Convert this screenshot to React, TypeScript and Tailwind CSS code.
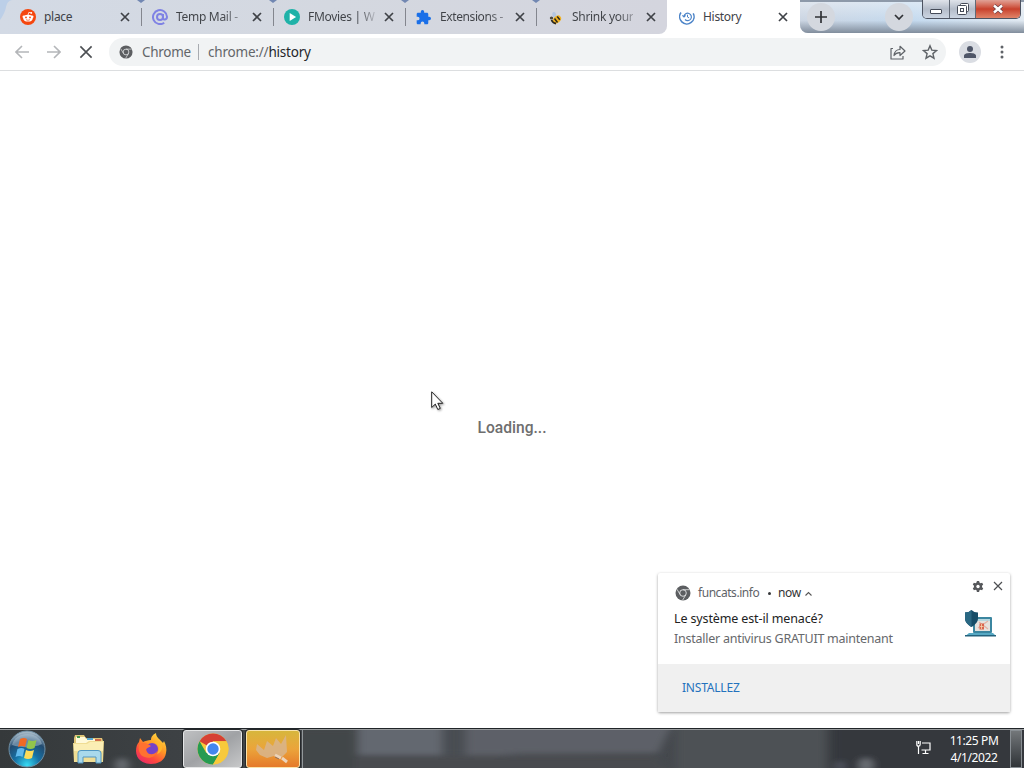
import React from 'react';
import clsx from 'clsx';

const CloseIcon: React.FC<{ className?: string }> = ({ className }) => (
  <svg className={className} viewBox="0 0 10 10" fill="none" stroke="currentColor">
    <path d="M1 1l8 8M9 1L1 9" />
  </svg>
);

const RedditIcon = () => (
  <svg className="w-4 h-4" viewBox="0 0 16 16">
    <circle cx="8" cy="8" r="8" fill="#f5470f" />
    <path d="M8 6l.8-2.600 2.200.4" stroke="#fff" strokeWidth=".8" fill="none" />
    <circle cx="11.300" cy="3.900" r=".9" fill="#fff" />
    <circle cx="3.800" cy="7.800" r="1.300" fill="#fff" />
    <circle cx="12.200" cy="7.800" r="1.300" fill="#fff" />
    <ellipse cx="8" cy="9.200" rx="4.700" ry="3.400" fill="#fff" />
    <circle cx="6" cy="8.400" r=".9" fill="#f5470f" />
    <circle cx="10" cy="8.400" r=".9" fill="#f5470f" />
    <path d="M6 10.700q2 1.200 4 0" stroke="#f5470f" strokeWidth=".7" fill="none" />
  </svg>
);

const MailIcon = () => (
  <svg className="w-4 h-4" viewBox="0 0 16 16" fill="none" stroke="#7f82e4" strokeWidth="2">
    <circle cx="8" cy="8" r="3" />
    <path d="M11 5v3.800c0 2.600 4 2.200 4-1A7 7 0 1 0 12.200 13.700" />
  </svg>
);

const PlayIcon = () => (
  <svg className="w-4 h-4" viewBox="0 0 16 16">
    <circle cx="8" cy="8" r="8" fill="#1fb2a8" />
    <path d="M5.700 4v8l6.400-4z" fill="#fff" />
  </svg>
);

const PuzzleIcon = () => (
  <svg className="w-[15px] h-[15px] mr-px" viewBox="1 1 22 22" fill="#1a6fe8">
    <path d="M20.500 11H19V7c0-1.100-.9-2-2-2h-4V3.500a2.500 2.500 0 0 0-5 0V5H4c-1.100 0-2 .9-2 2v3.800h1.500a2.700 2.700 0 0 1 0 5.400H2V20c0 1.100.9 2 2 2h3.800v-1.500a2.700 2.700 0 0 1 5.400 0V22H17c1.100 0 2-.9 2-2v-4h1.500a2.500 2.500 0 0 0 0-5z" />
  </svg>
);

const BeeIcon = () => (
  <svg className="w-4 h-4" viewBox="0 0 16 16">
    <ellipse cx="6.300" cy="6" rx="1.900" ry="3" fill="#b4c6e2" transform="rotate(-15 6.300 6)" />
    <ellipse cx="3.500" cy="9" rx="1.700" ry="1.500" fill="#4a4740" />
    <ellipse cx="9" cy="10.500" rx="4.600" ry="3.300" fill="#f2b322" transform="rotate(-42 9 10.500)" />
    <path d="M6.500 9.500l3 4M9.200 7.500l2.600 3.200" stroke="#2d281d" strokeWidth="1.500" />
    <path d="M3.500 11q1.500 3.500 4.500 3.500" stroke="#2d281d" strokeWidth="1.800" fill="none" />
  </svg>
);

const HistoryIcon = () => (
  <svg className="w-4 h-4" viewBox="0 0 16 16" fill="none" stroke="#4c84c8">
    <path d="M2 3.500A7.200 7.200 0 1 0 14.200 4.300" strokeWidth="1.500" />
    <path d="M5 7.500A3.700 3.700 0 1 1 6 10.500M3.400 6.300L5 7.900l1.600-1.600" strokeWidth="1.200" />
    <path d="M8.500 5.700v2.300l1.600.9" strokeWidth="1" />
  </svg>
);

const ChromeGrayIcon: React.FC<{ className?: string }> = ({ className }) => (
  <svg className={className} viewBox="0 0 16 16">
    <circle cx="8" cy="8" r="7.500" fill="#5c5e61" />
    <circle cx="8" cy="8" r="3.300" fill="none" stroke="#e6e8e9" strokeWidth=".9" />
    <path d="M8 4.700h6.500M5.100 9.600L2 4.300M10.800 9.800L7.600 15.200" stroke="#e6e8e9" strokeWidth=".8" />
  </svg>
);

type TabItem = {
  title: string;
  icon: React.ReactNode;
  className: string;
  titleClass?: string;
};

const tabs: TabItem[] = [
  { title: 'place', icon: <RedditIcon />, className: 'w-[141px] pl-5', titleClass: 'text-[#3f4247]' },
  {
    title: 'Temp Mail -',
    icon: <MailIcon />,
    className: 'w-[132px] pl-[11px]',
    titleClass: 'bg-linear-to-r from-[#3f4247] from-75% to-[#3f4247]/50 bg-clip-text text-transparent',
  },
  {
    title: 'FMovies | W',
    icon: <PlayIcon />,
    className: 'w-[132px] pl-[11px]',
    titleClass: 'bg-linear-to-r from-[#3f4247] from-75% to-[#3f4247]/20 bg-clip-text text-transparent',
  },
  {
    title: 'Extensions -',
    icon: <PuzzleIcon />,
    className: 'w-[131px] pl-[11px]',
    titleClass: 'tracking-[-0.4px] bg-linear-to-r from-[#3f4247] from-75% to-[#3f4247]/50 bg-clip-text text-transparent',
  },
  {
    title: 'Shrink your',
    icon: <BeeIcon />,
    className: 'w-[131px] pl-3',
    titleClass: 'bg-linear-to-r from-[#3f4247] from-75% to-[#3f4247]/40 bg-clip-text text-transparent',
  },
];

const TabStrip = () => (
  <div className="flex h-[34px] bg-white shrink-0 text-[12px] tracking-[-0.3px] text-[#3f4247]">
    <div className="flex w-[667px] rounded-br-lg bg-linear-to-r from-[#d3dae5] via-[#d4d8e0] to-[#d4d5de]">
      {tabs.map((tab, i) => (
        <div key={tab.title} className={clsx('flex items-center relative shrink-0', tab.className)}>
          {i === 0 && (
            <svg className="absolute left-0 top-0 w-3 h-5" viewBox="0 0 12 20">
              <path d="M0 0h12Q7 1 6 7T0 20z" fill="#bccfe8" />
            </svg>
          )}
          {i > 0 && <span className="absolute left-0 top-2 w-px h-[18px] bg-[#83868e]" />}
          {i > 0 && (
            <svg className="absolute -left-[4px] top-0 w-2 h-[3px]" viewBox="0 0 8 3">
              <path d="M0 0h8L4 3z" fill="#7187b2" />
            </svg>
          )}
          {tab.icon}
          <span className={clsx('ml-2 whitespace-nowrap', tab.titleClass)}>{tab.title}</span>
          <CloseIcon className="ml-auto mr-[11px] w-[10px] h-[10px] stroke-[1.7]" />
        </div>
      ))}
    </div>

    <div className="flex items-center w-[133px] pl-3 rounded-t-lg bg-white">
      <HistoryIcon />
      <span className="ml-2">History</span>
      <CloseIcon className="ml-auto mr-3 w-[10px] h-[10px] stroke-[1.7]" />
    </div>

    {/* Aero window frame */}
    <div className="flex flex-1 h-[33px] rounded-bl-lg border-t-2 border-[#8d99a9] bg-linear-to-r from-[#c4cddb] via-[#b9d3ec] to-[#e2e9f0]">
      <div className="flex flex-1 rounded-bl-lg bg-linear-to-b from-[#f2f6fa]/60 via-[#dce8f3]/30 via-60% to-[#818d9c]">
        <div className="ml-[7px] mt-px w-7 h-7 rounded-full bg-[#d4d8df] flex items-center justify-center">
          <svg className="w-3 h-3" viewBox="0 0 12 12" stroke="#303236" strokeWidth="1.700">
            <path d="M6 0v12M0 6h12" />
          </svg>
        </div>
        <div className="ml-[50px] mt-px w-7 h-7 rounded-full bg-[#d4d8df] flex items-center justify-center">
          <svg className="w-[10px] h-[7px]" viewBox="0 0 10 7" fill="none" stroke="#303236" strokeWidth="1.700">
            <path d="M1 1l4 4 4-4" />
          </svg>
        </div>
        <div className="flex ml-auto mr-[3px] -mt-0.5 w-[99px] h-[19px] rounded-b-[5px] border border-t-0 border-[#4d5361] overflow-hidden">
          <div className="w-[27px] bg-linear-to-b from-[#dfe3ea] via-[#b4bcc9] to-[#ccd5e2] border-r border-[#626a77] flex items-center justify-center">
            <svg className="w-3 h-[5px] mt-[5px]" viewBox="0 0 12 5">
              <rect x=".5" y=".5" width="11" height="4" rx=".5" fill="#fff" stroke="#454b58" />
            </svg>
          </div>
          <div className="w-[26px] bg-linear-to-b from-[#dfe3ea] via-[#b4bcc9] to-[#ccd5e2] border-r border-[#626a77] flex items-center justify-center">
            <svg className="w-3 h-3" viewBox="0 0 12 12" fill="#fff" stroke="#454b58">
              <rect x="3.500" y=".5" width="8" height="8" rx="1" />
              <rect x=".5" y="2.500" width="9" height="9" rx="1" />
              <rect x="3.500" y="5.500" width="3" height="3" />
            </svg>
          </div>
          <div className="flex-1 bg-linear-to-b from-[#e0a196] via-[#c8402c] to-[#e08368] flex items-center justify-center">
            <svg className="w-3 h-[10px]" viewBox="0 0 12 10">
              <path d="M2 1.500l8 7M10 1.500l-8 7" stroke="#683e47" strokeWidth="3.800" />
              <path d="M2 1.500l8 7M10 1.500l-8 7" stroke="#fff" strokeWidth="2.400" />
            </svg>
          </div>
        </div>
      </div>
    </div>
  </div>
);

const Toolbar = () => (
  <div className="flex items-center h-[37px] shrink-0 bg-white border-b border-[#dcdee0] pl-[15px]">
    <svg className="w-[14px] h-[14px]" viewBox="0 0 14 14" fill="none" stroke="#b4b6b9" strokeWidth="1.600">
      <path d="M14 7H1.500M7 1L1 7l6 6" />
    </svg>
    <svg className="ml-[18px] w-[14px] h-[14px]" viewBox="0 0 14 14" fill="none" stroke="#b4b6b9" strokeWidth="1.600">
      <path d="M0 7h12.500M7 1l6 6-6 6" />
    </svg>
    <CloseIcon className="ml-[18px] w-[14px] h-[14px] stroke-[1.15] text-[#4c4f53]" />
    <div className="ml-4 flex items-center w-[837px] h-7 rounded-full bg-[#f1f3f4] pl-[10px] text-[13.5px]">
      <ChromeGrayIcon className="w-[14px] h-[14px]" />
      <span className="ml-[9px] w-[49px] whitespace-nowrap tracking-[-0.3px] text-[#63666a]">Chrome</span>
      <span className="ml-[7px] w-px h-4 bg-[#a8abb0]" />
      <span className="ml-[9px] tracking-[-0.2px] text-[#63666a] whitespace-nowrap">
        chrome://<span className="text-[#24262a]">history</span>
      </span>
      <svg className="ml-auto w-4 h-4" viewBox="0 0 16 16" fill="none" stroke="#5f6368" strokeWidth="1.200">
        <path d="M3 4.500H1V15h12v-3M4 11.500c.5-4 2.500-6 6-6V2.300L15 7l-5 4.500V8.700c-2.500-.1-4.500.8-6 2.800z" strokeLinejoin="round" />
      </svg>
      <svg className="ml-4 mr-2 w-4 h-4" viewBox="0 0 16 16" fill="none" stroke="#5f6368" strokeWidth="1.400">
        <path d="M8 1.800l1.800 4.300 4.700.4-3.600 3.100 1.100 4.600L8 11.800l-4 2.400 1.100-4.600-3.600-3.100 4.700-.4z" />
      </svg>
    </div>
    <div className="ml-[13px] w-[22px] h-[22px] rounded-full bg-[#dadde3] flex items-center justify-center">
      <svg className="w-3 h-3" viewBox="0 0 12 12" fill="#4f5668">
        <circle cx="6" cy="3" r="3" />
        <path d="M0 12V9.500C0 7.800 3.500 7 6 7s6 .8 6 2.500V12z" />
      </svg>
    </div>
    <svg className="ml-[19px] w-1 h-[14px]" viewBox="0 0 4 14" fill="#5f6368">
      <circle cx="2" cy="2" r="1.500" />
      <circle cx="2" cy="7" r="1.500" />
      <circle cx="2" cy="12" r="1.500" />
    </svg>
  </div>
);

const AntivirusIcon = () => (
  <svg className="w-8 h-[30px]" viewBox="0 0 32 30">
    <rect x="9" y="8" width="19" height="16" rx="1" fill="#3b86a0" />
    <rect x="11" y="10" width="15" height="12" fill="#e6e2de" />
    <path d="M11 10h15v2H11z" fill="#b6d7df" />
    <path d="M14 19l10-7M15 13l9 7" stroke="#e3b0a4" strokeWidth="1.200" />
    <rect x="15.500" y="14.500" width="4.500" height="6" fill="#d9644d" />
    <path d="M17.500 15v5M16 17.500h3.500" stroke="#f5d5b0" strokeWidth=".8" />
    <path d="M5 24h24l2.500 2.500H2z" fill="#56a9c4" />
    <path d="M1 26h31v1.500H1z" fill="#23627d" />
    <path d="M1 3.500Q5 3.500 7.500 1 10 3.500 14 3.500v6c0 3.500-3 6.500-6.500 8.500C4 16 1 13 1 9.500z" fill="#164d68" />
    <path d="M7.500 1v17C4 16 1 13 1 9.500v-6Q5 3.500 7.500 1z" fill="#2a6883" />
  </svg>
);

const Notification = () => (
  <div className="absolute left-[658px] top-[573px] w-[352px] h-[139px] rounded-[2px] bg-white shadow-[0_1px_3px_rgba(0,0,0,0.38)] flex flex-col">
    <div className="flex h-[91px]">
      <div className="pl-4 pt-3 flex-1 whitespace-nowrap">
        <div className="flex items-center h-4 text-[12px] text-[#5f6368]">
          <ChromeGrayIcon className="ml-[1px] w-4 h-4" />
          <span className="ml-[7px] w-[70px] tracking-[-0.45px]">funcats.info</span>
          <span className="w-[3px] h-[3px] rounded-full bg-[#35373a]" />
          <span className="ml-[7px] w-[24px] tracking-[-0.4px] text-[#333]">now</span>
          <svg className="ml-[3px] w-[7px] h-[5px]" viewBox="0 0 7 5" fill="none" stroke="#555" strokeWidth="1.100">
            <path d="M.5 4.500l3-3 3 3" />
          </svg>
        </div>
        <div className="mt-[8px] text-[12.5px] leading-5 tracking-[-0.13px] text-[#222]">Le système est-il menacé?</div>
        <div className="text-[12.5px] leading-5 tracking-[-0.25px] text-[#66686b]">Installer antivirus GRATUIT maintenant</div>
      </div>
      <div className="w-[46px] pt-2">
        <div className="flex items-center ml-[8px]">
          <svg className="w-3 h-[11px]" viewBox="0 0 12 12">
            <path d="M4.800 0h2.400l.4 1.700 1.200.7 1.700-.5 1.200 2-1.300 1.300v1.500l1.300 1.300-1.200 2-1.700-.5-1.200.7-.4 1.800H4.800l-.4-1.800-1.200-.7-1.700.5-1.200-2 1.300-1.300V5.200L.3 3.900l1.200-2 1.700.5 1.200-.7z" fill="#56585b" />
            <circle cx="6" cy="6" r="1.800" fill="#fff" />
          </svg>
          <CloseIcon className="ml-[9px] -mt-px w-[10px] h-[10px] text-[#4d4f52] stroke-[1.2]" />
        </div>
        <div className="mt-[17px]">
          <AntivirusIcon />
        </div>
      </div>
    </div>
    <div className="flex-1 flex items-center pl-6 bg-[#f0f0f0] text-[12px] tracking-[-0.2px] text-[#2372bd]">INSTALLEZ</div>
  </div>
);

const StartOrb = () => (
  <svg className="w-[38px] h-[38px]" viewBox="0 0 38 38">
    <defs>
      <radialGradient id="orb" cx=".5" cy=".95" r=".9">
        <stop offset="0" stopColor="#37dcf4" />
        <stop offset=".4" stopColor="#1671a5" />
        <stop offset=".75" stopColor="#234b70" />
        <stop offset="1" stopColor="#a1b5c4" />
      </radialGradient>
    </defs>
    <circle cx="19" cy="19" r="18" fill="url(#orb)" stroke="#6e8fa5" />
    <path d="M4 15C7 1 30 0 34 14c-8 4-21 4-30 1z" fill="#bed2df" opacity=".45" />
    <path d="M12 9q4-2 7 0l-2 8q-3-2-7 0z" fill="#f06a24" />
    <path d="M20.500 10q4 2 8 0l-2 8q-4 2-8 0z" fill="#93c54b" />
    <path d="M9.500 19q4-2 7 0l-2 8q-3-2-7 0z" fill="#60b9ec" />
    <path d="M18 20q4 2 8 0l-2 8q-4 2-8 0z" fill="#fddc59" />
  </svg>
);

const FolderIcon = () => (
  <svg className="w-[34px] h-[32px]" viewBox="0 0 34 32">
    <path d="M2 5l1-3h9l2 3h16l1 3v18H2z" fill="#dfc477" />
    <path d="M4 4h9l1 2h15v5H4z" fill="#fff9d9" />
    <path d="M5 3h3v2H5z" fill="#45964c" />
    <path d="M15 5h6v2h-6z" fill="#59a9d1" />
    <path d="M23 6h6v2h-6z" fill="#d16d4b" />
    <path d="M1 10h13l3-2h15l-1 21H2z" fill="#f0dd94" />
    <path d="M2 11h13l3-2h13v9H2z" fill="#fbeeb4" />
    <path d="M6 30V20q0-2.500 3-2.500h17q3 0 3 2.500v10h-5v-6H11v6z" fill="#a9d9ec" stroke="#5297c2" />
  </svg>
);

const FirefoxIcon = () => (
  <svg className="w-8 h-8" viewBox="0 0 32 32">
    <defs>
      <linearGradient id="fox" x1=".85" y1="0" x2=".2" y2="1">
        <stop offset="0" stopColor="#ffe447" />
        <stop offset=".4" stopColor="#ff9824" />
        <stop offset=".72" stopColor="#ff493d" />
        <stop offset="1" stopColor="#e72869" />
      </linearGradient>
    </defs>
    <path d="M5 5l3 4c2-1 5-2 8-2 0-4 3-6 5-7 0 5 5 7 7 10l1-2c2 4 3 8 2 12-1 7-7 11-15 11S1 26 1 18c0-4 1-7 3-9z" fill="url(#fox)" />
    <circle cx="17" cy="16" r="6" fill="#7542c8" />
    <path d="M4 12c4-4 9-1 12 1-2 2-4 1-5 4 1 5 8 6 11 1-1 7-10 9-16 4-2-3-3-6-2-10z" fill="#ff7130" />
    <path d="M19 9c5 2 6 7 3 12 5-2 6-6 5-10-3-3-5-3-8-2z" fill="#ffb52b" />
  </svg>
);

const ChromeIcon = () => (
  <svg className="w-8 h-8" viewBox="0 0 32 32">
    <circle cx="16" cy="16" r="15.500" fill="#f7c93c" />
    <path d="M16 16L2.600 8.250A15.500 15.500 0 0 1 29.400 8.250H16z" fill="#d64034" />
    <path d="M2.600 8.250A15.500 15.500 0 0 0 16 31.500l6.700-11.600L16 16l-6.700 3.900z" fill="#269b52" />
    <path d="M16 8.300h13.400a15.500 15.500 0 0 1-13.400 23.200l6.700-11.600z" fill="#f7c93c" />
    <circle cx="16" cy="16" r="7.300" fill="#fff" />
    <circle cx="16" cy="16" r="5.700" fill="#4387ee" />
  </svg>
);

const Taskbar = () => (
  <div className="relative flex h-10 shrink-0 border-t border-[#202529] bg-linear-to-r from-[#35393b] via-[#4d5156] to-[#33363b]">
    {/* Aero glass reflections */}
    <svg className="absolute left-0 top-0 w-full h-[39px]" viewBox="0 0 1024 39" preserveAspectRatio="none">
      <defs>
        <filter id="soft" x="-20%" y="-40%" width="140%" height="180%">
          <feGaussianBlur stdDeviation="4 2.500" />
        </filter>
      </defs>
      <g filter="url(#soft)">
        <rect x="296" width="60" height="42" fill="#42474a" />
        <rect x="358" y="-8" width="84" height="34" fill="#646770" />
        <rect x="445" y="-8" width="18" height="34" fill="#4a4d53" />
        <path d="M466-8h208l-16 32H520l-20 2h-34z" fill="#5d6068" />
        <path d="M356 27h300l16 16H356z" fill="#484c50" />
        <rect x="676" y="-8" width="150" height="55" fill="#4d5155" />
        <rect x="832" y="-8" width="200" height="55" fill="#35383d" />
        <circle cx="866" cy="36" r="7" fill="#6b6e75" />
        <circle cx="840" cy="37" r="5" fill="#50535e" />
        <circle cx="122" cy="36" r="7" fill="#666a70" />
      </g>
      <rect width="1024" height="1" fill="#999c9e" />
    </svg>
    <div className="relative flex items-center w-full">
      <div className="ml-2"><StartOrb /></div>
      <div className="ml-[26px]"><FolderIcon /></div>
      <div className="ml-[29px]"><FirefoxIcon /></div>
      <div className="ml-4 w-[59px] h-[38px] rounded-[3px] border border-[#e4e5e6] bg-linear-to-br from-[#bfc0c2] via-[#a0a2a5] to-[#c7c8c9] flex items-center justify-center shadow-[0_0_0_1px_#25282b]">
        <ChromeIcon />
      </div>
      <div className="ml-[4px] w-[54px] h-[38px] rounded-[3px] border border-[#f9e3ac] bg-linear-to-b from-[#d7b63c] via-[#eba43a] to-[#e5792a] flex items-center justify-center shadow-[0_0_0_1px_#25282b]">
        <svg className="w-9 h-8" viewBox="0 0 36 32">
          <path d="M2 11l7 6 3-9 6 5 3-8 5 6 5-9 1 17-5 5-8-1-7 2-7-3-4-5z" fill="#d9b488" opacity=".9" />
          <path d="M20 22l6 3M27 25l5 4" stroke="#ecd4bb" strokeWidth="3" />
          <path d="M20 24l4 2" stroke="#8f7060" strokeWidth="1" />
        </svg>
      </div>
      <div className="w-[3px] h-[38px] border-r border-[#92989b]" />
      <svg className="ml-auto -mt-px w-[15px] h-[14px]" viewBox="0 0 15 14" fill="none" stroke="#fff" strokeWidth="1.200">
        <path d="M6 2h8v7H5.500M9.500 9v3M6.500 12.500h6M2.500 5.500V13M.8 0v3.200q0 2 1.700 2t1.700-2V0M2.500 0v3" />
      </svg>
      <div className="ml-[18px] w-[50px] text-center text-[12px] leading-[17px] pt-px tracking-[-0.4px] whitespace-nowrap text-white">
        <div>11:25 PM</div>
        <div>4/1/2022</div>
      </div>
      <div className="ml-[11px] w-[12px] h-[38px] border border-[#888e93] bg-linear-to-b from-[#73777a] to-[#303438]" />
      <div className="w-[2px]" />
    </div>
  </div>
);

export default function App() {
  return (
    <div className="relative w-[1024px] h-[768px] overflow-hidden flex flex-col bg-white font-['Noto_Sans','Open_Sans',sans-serif]">
      <TabStrip />
      <Toolbar />
      <main className="flex-1 flex justify-center bg-white">
        <div className="mt-[345px] font-['Roboto',sans-serif] font-medium text-[15.6px] leading-6 text-[#6e6e6e]">Loading...</div>
      </main>
      <Taskbar />
      <Notification />
      <svg className="absolute left-[431px] top-[391px] w-[14px] h-[21px] drop-shadow-[1px_1px_1px_rgba(0,0,0,0.4)]" viewBox="0 0 14 21">
        <path d="M.7.800v15.700l3.600-3.400 2.500 5.400 2.500-1.100-2.500-5.100h5z" fill="#fff" stroke="#222" />
      </svg>
    </div>
  );
}
